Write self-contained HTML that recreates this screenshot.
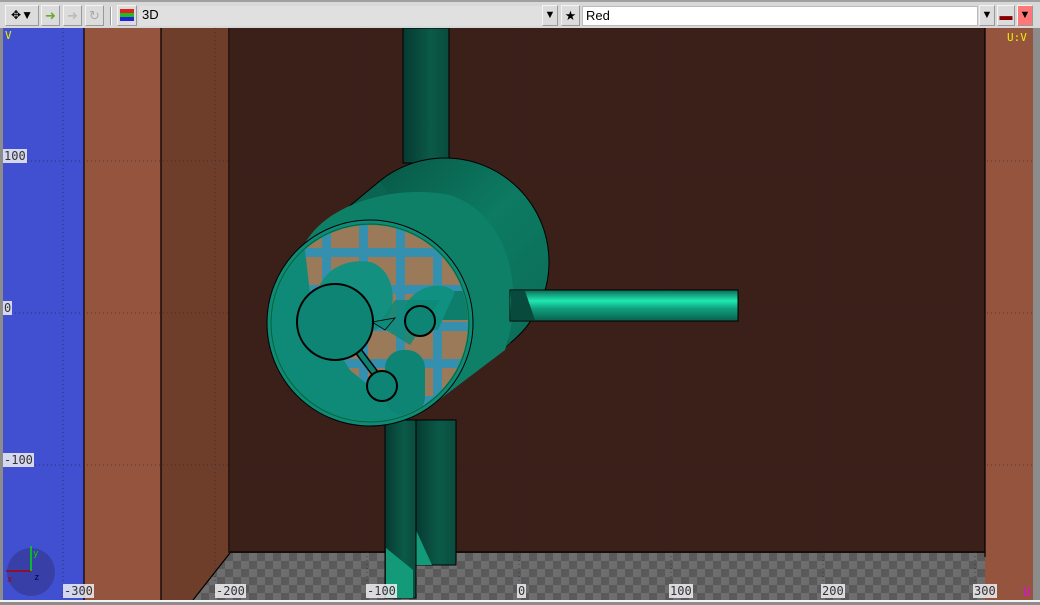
<!DOCTYPE html>
<html><head><meta charset="utf-8"><style>
*{margin:0;padding:0;box-sizing:border-box}
body{width:1040px;height:605px;background:#8c8c8c;font-family:"Liberation Sans","DejaVu Sans",sans-serif;position:relative;overflow:hidden}
.tb{position:absolute;left:0;top:0;width:1040px;height:28px;background:#d8d8d8;border-top:2px solid #a0a0a0}
.btn{position:absolute;top:3px;height:21px;background:#dcdcdc;border:1px solid #f4f4f4;border-right-color:#999;border-bottom-color:#999;font-size:13px;text-align:center;line-height:19px}
.field{position:absolute;top:4px;height:20px;background:#fff;border:1px solid #bbb;font-size:13px;line-height:18px;padding-left:3px}
.lbl{position:absolute;font-family:"DejaVu Sans Mono","Liberation Mono",monospace;font-size:12px;background:rgba(240,240,245,0.85);color:#333;padding:0 1px;line-height:14px}
</style></head><body>
<div class="tb">
<div class="btn" style="left:5px;width:34px;font-size:12px">✥▼</div>
<div class="btn" style="left:41px;width:19px;color:#6a3">➜</div>
<div class="btn" style="left:63px;width:19px;color:#bbb">➜</div>
<div class="btn" style="left:85px;width:19px;color:#aaa">↻</div>
<div style="position:absolute;left:110px;top:5px;width:2px;height:18px;border-left:1px solid #999;border-right:1px solid #fff"></div>
<div class="btn" style="left:117px;width:20px;padding:3px 2px"><div style="height:4px;background:#d22"></div><div style="height:4px;background:#2b2"></div><div style="height:4px;background:#22d"></div></div>
<div class="field" style="left:139px;width:403px;background:#e0e0e0;border:none">3D</div>
<div class="btn" style="left:542px;width:16px;font-size:11px">▼</div>
<div class="btn" style="left:561px;width:19px">★</div>
<div class="field" style="left:582px;width:396px">Red</div>
<div class="btn" style="left:979px;width:16px;font-size:11px">▼</div>
<div class="btn" style="left:997px;width:18px;color:#800">▬</div>
<div class="btn" style="left:1017px;width:16px;background:#f77;font-size:11px">▼</div>
</div>
<svg style="position:absolute;left:3px;top:28px" width="1030" height="572" viewBox="3 28 1030 572">
<defs>
<pattern id="chk" width="16" height="16" patternUnits="userSpaceOnUse" x="193" y="553"><rect width="16" height="16" fill="#6e6e6e"/><rect width="8" height="8" fill="#5a5a5a"/><rect x="8" y="8" width="8" height="8" fill="#5a5a5a"/></pattern>
<pattern id="mesh" width="37" height="37" patternUnits="userSpaceOnUse" x="325" y="214"><rect width="37" height="37" fill="#3590b0"/><rect x="6" y="6" width="28" height="28" fill="#9a7a58"/></pattern>
<clipPath id="disk"><circle cx="370" cy="323" r="98"/></clipPath>
<linearGradient id="hp" x1="0" y1="0" x2="0" y2="1"><stop offset="0" stop-color="#0a6a58"/><stop offset=".35" stop-color="#20e8b0"/><stop offset=".6" stop-color="#10a080"/><stop offset="1" stop-color="#08604c"/></linearGradient>
<linearGradient id="vp" x1="0" y1="0" x2="1" y2="0"><stop offset="0" stop-color="#063a30"/><stop offset=".6" stop-color="#0b5a48"/><stop offset="1" stop-color="#0a4c3e"/></linearGradient>
<linearGradient id="body" x1="0" y1="0" x2="1" y2="1"><stop offset="0" stop-color="#06503f"/><stop offset=".5" stop-color="#0d7a62"/><stop offset="1" stop-color="#0b6a55"/></linearGradient>
</defs>
<rect x="3" y="28" width="1030" height="572" fill="#3a2018"/>
<rect x="3" y="28" width="81" height="572" fill="#4050d0"/>
<rect x="84" y="28" width="77" height="572" fill="#94543e"/>
<rect x="161" y="28" width="69" height="572" fill="#6e3e2a"/>
<rect x="985" y="28" width="48" height="572" fill="#94543e"/>
<polygon points="230,553 985,553 985,600 193,600" fill="url(#chk)"/>
<polygon points="230,553 193,600 161,600 161,553" fill="#6e3e2a"/>
<g stroke="#000" stroke-width="1.2" fill="none"><line x1="84" y1="28" x2="84" y2="600"/><line x1="161" y1="28" x2="161" y2="600"/><line x1="229" y1="28" x2="229" y2="553"/><line x1="230" y1="553" x2="193" y2="600"/><line x1="230" y1="552" x2="985" y2="552"/><line x1="985" y1="28" x2="985" y2="557"/></g>
<g stroke="#223" stroke-width="1" stroke-dasharray="1,3" opacity=".6">
<line x1="63" y1="28" x2="63" y2="600"/><line x1="215" y1="28" x2="215" y2="600"/><line x1="367" y1="28" x2="367" y2="600"/><line x1="519" y1="28" x2="519" y2="600"/><line x1="671" y1="28" x2="671" y2="600"/><line x1="823" y1="28" x2="823" y2="600"/><line x1="975" y1="28" x2="975" y2="600"/>
<line x1="3" y1="161" x2="1033" y2="161"/><line x1="3" y1="313" x2="1033" y2="313"/><line x1="3" y1="465" x2="1033" y2="465"/></g>
<!-- bottom pipes -->
<rect x="415" y="420" width="41" height="145" fill="url(#vp)" stroke="#000"/>
<polygon points="416,530 432,565 416,565" fill="#139a78"/>
<rect x="385" y="420" width="31" height="178" fill="url(#vp)" stroke="#000"/>
<polygon points="386,548 413,570 413,598 386,598" fill="#139a78"/>
<!-- top pipe -->
<rect x="403" y="28" width="46" height="135" fill="url(#vp)" stroke="#000"/>
<!-- body -->
<circle cx="445" cy="262" r="104" fill="url(#body)" stroke="#000"/>
<polygon points="379.5,181.3 510.5,342.7 434.9,402.9 305.1,243.1" fill="#0a6450"/>
<line x1="379.5" y1="181.3" x2="305.1" y2="243.1" stroke="#000"/>
<path d="M305,243 C330,200 400,185 450,195 C510,215 525,290 505,350 L435,403 Z" fill="#0e8068"/>
<!-- right pipe -->
<rect x="510" y="290" width="228" height="31" fill="url(#hp)" stroke="#000"/>
<polygon points="511,291 525,291 535,320 511,320" fill="#084a3c"/>
<!-- front disk -->
<circle cx="370" cy="323" r="103" fill="#108a78" stroke="#000"/>
<circle cx="370" cy="323" r="99" fill="none" stroke="#063" stroke-width="1"/>
<g clip-path="url(#disk)">
<path d="M300,212 L480,212 L480,400 L440,400 L410,420 L350,370 L312,310 L305,250 Z" fill="url(#mesh)"/>
<path d="M440,291 L492,291 L492,320 L440,320 Z" fill="#0d7e6c"/>
<path d="M315,300 C320,270 345,258 370,262 C392,268 400,300 385,325 L345,345 Z" fill="#139080"/>
<rect x="385" y="350" width="40" height="65" rx="18" fill="#0d8474"/>
<path d="M405,305 C420,282 445,282 455,292 L438,330 L408,330 Z" fill="#0f9080"/>
<path d="M378,325 L395,300 L440,300 L410,345 Z" fill="#0e8a78" opacity=".85"/>
</g>
<line x1="350" y1="340" x2="380" y2="380" stroke="#000" stroke-width="8"/>
<line x1="350" y1="340" x2="380" y2="380" stroke="#0e8070" stroke-width="5"/>
<polygon points="372,322 395,318 385,330" fill="#0e8a78" stroke="#000" stroke-width=".8"/>
<circle cx="335" cy="322" r="38" fill="#0e8474" stroke="#000" stroke-width="2"/>
<circle cx="420" cy="321" r="15" fill="#0e8474" stroke="#000" stroke-width="2"/>
<circle cx="382" cy="386" r="15" fill="#0e8474" stroke="#000" stroke-width="2"/>
<!-- axis gizmo -->
<circle cx="31" cy="572" r="24" fill="#3840a8"/>
<line x1="6" y1="571" x2="31" y2="571" stroke="#a00" stroke-width="1.5"/>
<line x1="31" y1="571" x2="31" y2="546" stroke="#0d0" stroke-width="1.5"/>
<text x="33" y="556" font-size="9" fill="#0d0" font-family="DejaVu Sans Mono">y</text>
<text x="7" y="582" font-size="9" fill="#a00" font-family="DejaVu Sans Mono">x</text>
<text x="34" y="580" font-size="9" fill="#004" font-family="DejaVu Sans Mono">z</text>
</svg>
<div class="lbl" style="left:3px;top:149px">100</div>
<div class="lbl" style="left:3px;top:301px">0</div>
<div class="lbl" style="left:3px;top:453px">-100</div>
<div class="lbl" style="left:63px;top:584px">-300</div>
<div class="lbl" style="left:215px;top:584px">-200</div>
<div class="lbl" style="left:366px;top:584px">-100</div>
<div class="lbl" style="left:517px;top:584px">0</div>
<div class="lbl" style="left:669px;top:584px">100</div>
<div class="lbl" style="left:821px;top:584px">200</div>
<div class="lbl" style="left:973px;top:584px">300</div>
<div style="position:absolute;left:5px;top:29px;color:#ee0;font-size:11px;font-family:'DejaVu Sans Mono',monospace">V</div>
<div style="position:absolute;left:1007px;top:31px;color:#ee0;font-size:11px;font-family:'DejaVu Sans Mono',monospace">U:V</div>
<div style="position:absolute;left:1023px;top:585px;color:#e0e;font-size:12px;font-family:'DejaVu Sans Mono',monospace">U</div>
<div style="position:absolute;left:0;top:600px;width:1040px;height:2px;background:#f4f4f4"></div>
</body></html>
